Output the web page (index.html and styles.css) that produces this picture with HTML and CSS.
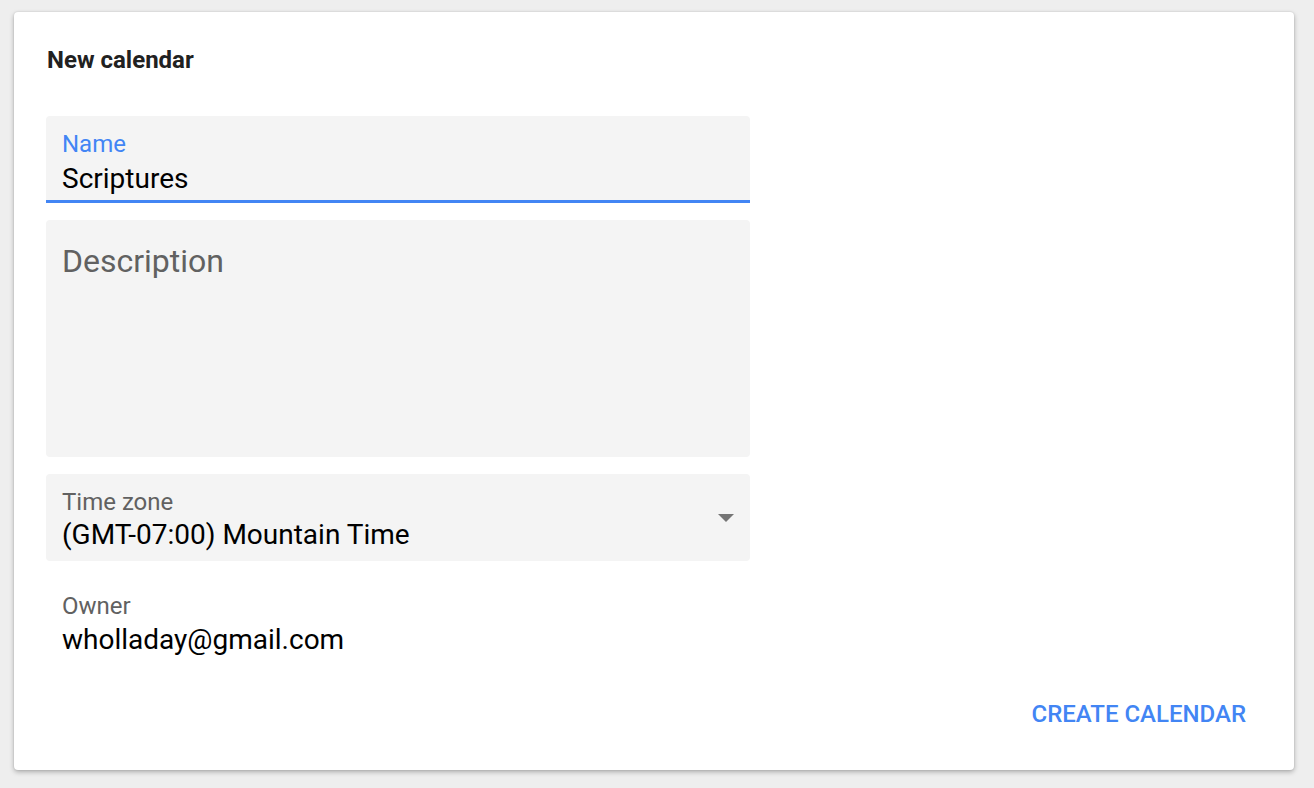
FILE: index.html
```html
<!DOCTYPE html>
<html>
<head>
<meta charset="utf-8">
<link rel="stylesheet" href="styles.css">
</head>
<body>
<div class="card">
  <h1 class="title">New calendar</h1>
  <div class="field field-name">
    <div class="label label-active">Name</div>
    <div class="value value-name">Scriptures</div>
  </div>
  <div class="field field-desc">
    <div class="placeholder">Description</div>
  </div>
  <div class="field field-tz">
    <div class="tz-text">
      <div class="label">Time zone</div>
      <div class="value value-tz">(GMT-07:00) Mountain Time</div>
    </div>
    <svg class="arrow" width="16" height="8" viewBox="0 0 16 8"><path d="M0 0H16L8 8Z" fill="#757575"/></svg>
  </div>
  <div class="owner">
    <div class="label">Owner</div>
    <div class="value value-owner">wholladay@gmail.com</div>
  </div>
  <div class="actions">
    <button class="btn">Create calendar</button>
  </div>
</div>
</body>
</html>
```
FILE: styles.css
```css
html, body {
  margin: 0;
  padding: 0;
  background: #eeeeee;
  font-family: Roboto, "Liberation Sans", sans-serif;
}
body {
  padding: 12px 20px 18px 14px;
}
.card {
  background: #fff;
  border-radius: 4px;
  box-shadow: 0 2px 5px rgba(0,0,0,0.28), 0 0 2px rgba(0,0,0,0.12);
  height: 758px;
  box-sizing: border-box;
  padding: 34px 48px 0 32px;
}
.title {
  margin: 0 0 0 1px;
  font-size: 24px;
  font-weight: 700;
  color: #212121;
  line-height: 29px;
}
.field {
  width: 704px;
  background: #f4f4f4;
  border-radius: 4px;
  box-sizing: border-box;
  padding: 0 16px;
}
.field-name {
  margin-top: 41px;
  height: 87px;
  border-bottom: 3px solid #4285f4;
  border-radius: 4px 4px 0 0;
  padding-top: 14px;
}
.label {
  font-size: 24px;
  line-height: 28px;
  color: #616161;
}
.label-active {
  color: #4285f4;
}
.value {
  font-size: 28px;
  color: #000;
}
.value-name {
  line-height: 41px;
}
.value-tz {
  line-height: 37px;
}
.value-owner {
  line-height: 39px;
}
.field-desc {
  margin-top: 17px;
  height: 237px;
  padding-top: 22px;
}
.placeholder {
  font-size: 32px;
  line-height: 38px;
  color: #616161;
}
.field-tz {
  margin-top: 17px;
  height: 87px;
  display: flex;
  align-items: flex-start;
  justify-content: space-between;
  padding-top: 14px;
}
.arrow {
  margin-top: 26px;
}
.owner {
  padding: 31px 16px 0;
}
.actions {
  display: flex;
  justify-content: flex-end;
  margin-top: 41px;
}
.btn {
  background: none;
  border: 0;
  padding: 0;
  font-family: Roboto, "Liberation Sans", sans-serif;
  font-size: 24px;
  line-height: 28px;
  font-weight: 500;
  color: #4285f4;
  text-transform: uppercase;
  letter-spacing: 0;
}
```
